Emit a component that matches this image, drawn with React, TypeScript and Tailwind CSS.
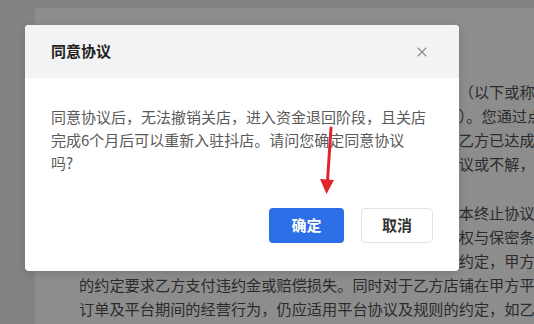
import { X } from "lucide-react";

const bgLines = [
  {
    top: true,
    lines: [
      "本协议由甲方与乙方共同签署，乙方同意遵守本服务协议（以下或称平台协议）",
      "简称本协议，具体内容均以平台公示的最新版本为准执行）。您通过点击同意按钮",
      "过点击同意即表示您已认真阅读并理解本协议全部内容，乙方已达成一致意见",
      "致意见。如您对本协议的任何条款内容存在任何疑问或异议或不解，请勿点击",
    ],
  },
  {
    top: false,
    lines: [
      "乙方申请关店并经甲方审核通过之后，双方一致同意根据本终止协议的约定",
      "解除双方合作关系。但乙方在合作期间所涉及到的知识产权与保密条款",
      "等义务仍继续有效。如乙方违反平台协议及规则中的相关约定，甲方有权依据",
      "的约定要求乙方支付违约金或赔偿损失。同时对于乙方店铺在甲方平台",
      "订单及平台期间的经营行为，仍应适用平台协议及规则的约定，如乙方",
    ],
  },
];

export default function App() {
  return (
    <div
      className="relative w-[534px] h-[324px] overflow-hidden bg-[#838383] pt-[8px] pl-[35px]"
      style={{ fontFamily: '"Noto Sans CJK SC", "Noto Sans", sans-serif' }}
    >
      {/* page behind the mask */}
      <div className="h-full bg-[#8d8d8d] pl-[44px] pt-[71px] text-[15.2px] leading-[24px] text-[#2b2b2b]">
        {bgLines.map((p, i) => (
          <div key={i} className={p.top ? "mb-[25px]" : ""}>
            {p.lines.map((line, j) => (
              <div key={j} className="whitespace-nowrap">
                {line}
              </div>
            ))}
          </div>
        ))}
      </div>

      {/* dialog */}
      <div className="absolute left-[25px] top-[25px] w-[434px] rounded-[4px] bg-white overflow-hidden shadow-[0_2px_8px_rgba(0,0,0,0.15)]">
        <div className="h-[53px] bg-[#f2f3f5] flex items-center justify-between pl-[26px] pr-[29px]">
          <span className="text-[15px] font-bold text-[#1f1f1f]">
            同意协议
          </span>
          <X size={16} strokeWidth={1.6} className="text-[#8c8c8c]" />
        </div>

        <div className="px-[26px] pt-[27px] pb-[28px]">
          <p className="text-[15px] leading-[23px] text-[#5a5a5a]">
            同意协议后，无法撤销关店，进入资金退回阶段，且关店完成6个月后可以重新入驻抖店。请问您确定同意协议
            <br />
            吗?
          </p>

          <div className="mt-[34px] flex justify-end gap-[17px]">
            <button className="w-[75px] h-[35px] rounded-[4px] bg-[#2c6fe6] text-white text-[15px] font-semibold">
              确定
            </button>
            <button className="w-[72px] h-[35px] rounded-[4px] border border-[#e3e3e3] bg-white text-[#333] text-[15px] font-semibold">
              取消
            </button>
          </div>
        </div>
      </div>

      {/* red annotation arrow */}
      <svg
        className="absolute left-0 top-0 pointer-events-none"
        width="534"
        height="324"
        viewBox="0 0 534 324"
      >
        <line
          x1="331"
          y1="128"
          x2="327.5"
          y2="181"
          stroke="#e0262c"
          strokeWidth="3"
          strokeLinecap="round"
        />
        <polygon points="320,179 334,180 326.5,194" fill="#e0262c" />
      </svg>
    </div>
  );
}
